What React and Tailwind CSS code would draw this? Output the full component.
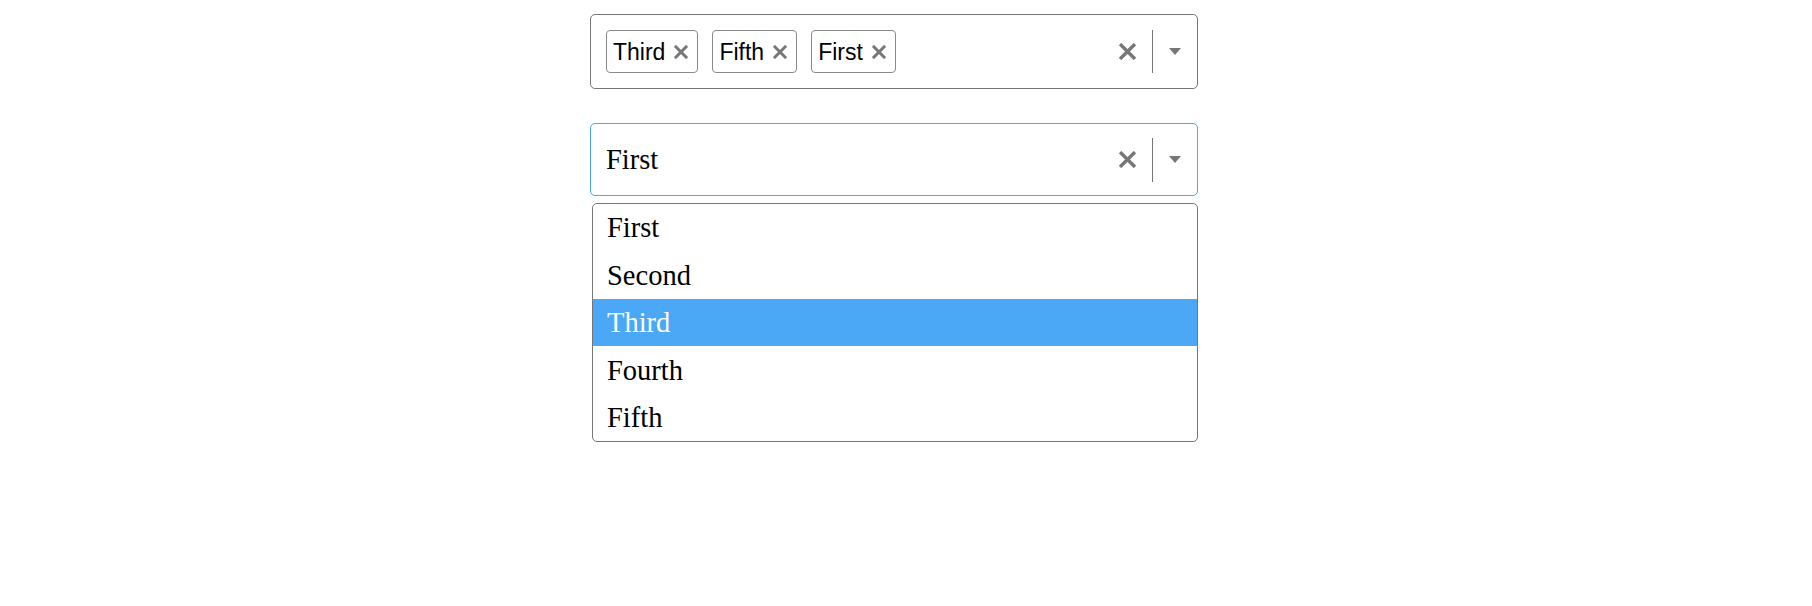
import React from 'react';

const options = ['First', 'Second', 'Third', 'Fourth', 'Fifth'];
const selected = ['Third', 'Fifth', 'First'];

const CrossIcon = ({ size = 16, stroke = 3 }) => (
  <svg width={size} height={size} viewBox="0 0 16 16" className="shrink-0">
    <path d="M1 1 L15 15 M15 1 L1 15" stroke="#777777" strokeWidth={stroke} fill="none" />
  </svg>
);

const Caret = () => (
  <svg width="12" height="7" viewBox="0 0 12 7" className="shrink-0">
    <path d="M0 0 L12 0 L6 7 Z" fill="#777777" />
  </svg>
);

const Controls = ({ sepHeight }) => (
  <div className="flex items-center">
    <CrossIcon size={17} stroke={3.2} />
    <div className={`ml-[16px] w-px bg-[#767676] ${sepHeight}`} />
    <div className="ml-[16px]">
      <Caret />
    </div>
  </div>
);

const Chip = ({ label }) => (
  <div className="flex h-[43px] items-center rounded-[4px] border border-[#8a8a8a] pl-[6px] pr-[9px]">
    <span className="pt-[1px] text-[23px] leading-none text-black">{label}</span>
    <span className="ml-[9px]">
      <CrossIcon size={14} stroke={3.4} />
    </span>
  </div>
);

export default function App() {
  return (
    <div className="min-h-screen bg-white pl-[590px] pt-[14px] font-['Liberation_Sans',Arial,sans-serif]">
      <div className="w-[608px]">
        {/* multi select */}
        <div className="flex h-[75px] items-center rounded-[5px] border border-[#767676] pl-[15px] pr-[16px]">
          <div className="flex flex-1 items-center gap-[14px]">
            {selected.map(s => <Chip key={s} label={s} />)}
          </div>
          <Controls sepHeight="h-[43px]" />
        </div>

        {/* single select, open */}
        <div className="mt-[34px] flex h-[73px] items-center rounded-[5px] border border-[#4aa8f5] pl-[15px] pr-[16px]">
          <span className="flex-1 pt-[2px] font-['Liberation_Serif','Times_New_Roman',serif] text-[28.5px] leading-none text-black">First</span>
          <Controls sepHeight="h-[44px]" />
        </div>

        <div className="ml-[2px] mt-[7px] w-[606px] overflow-hidden rounded-[5px] border border-[#767676] font-['Liberation_Serif','Times_New_Roman',serif]">
          {options.map(o => (
            <div
              key={o}
              className={`flex h-[47.4px] items-center px-[14px] pt-[2px] text-[28.5px] leading-none ${o === 'Third' ? 'bg-[#4aa8f6] text-white' : 'text-black'}`}
            >
              {o}
            </div>
          ))}
        </div>
      </div>
    </div>
  );
}
